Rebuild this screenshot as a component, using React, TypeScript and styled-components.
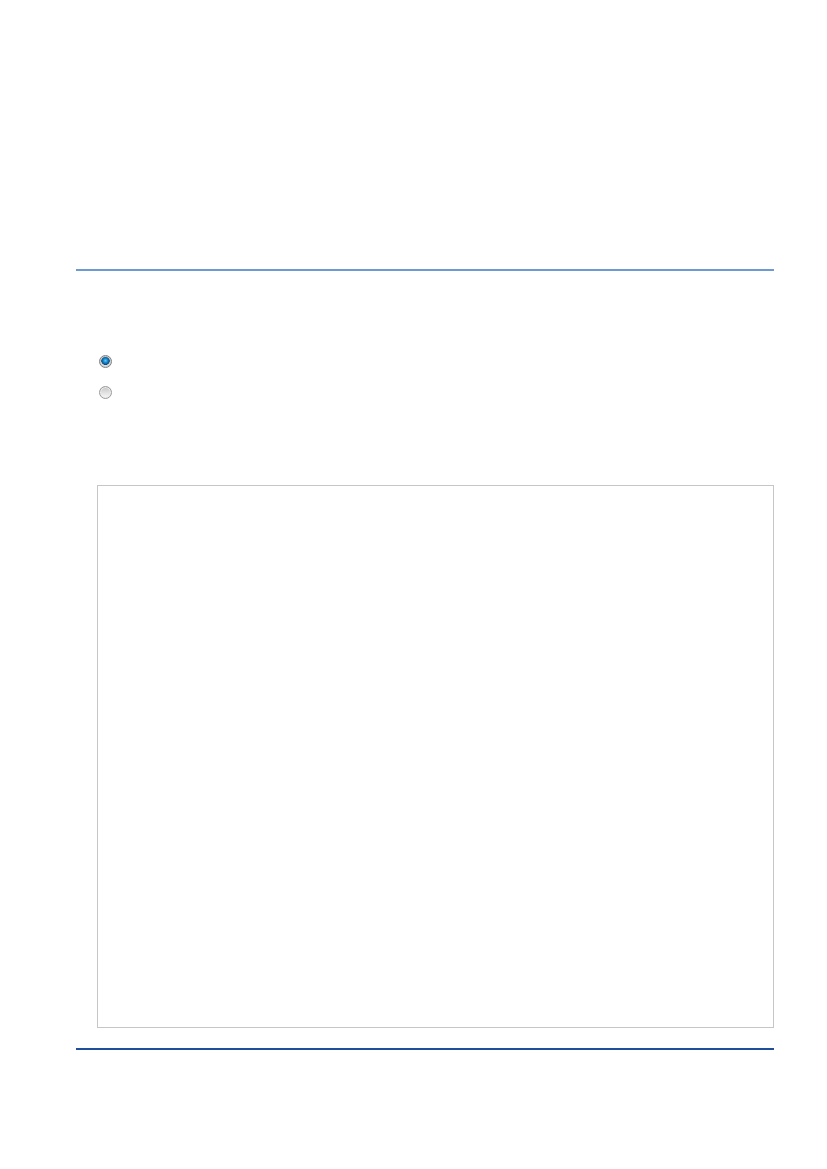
import React from "react";
import styled, { createGlobalStyle } from "styled-components";

const Global = createGlobalStyle`
  html, body {
    margin: 0;
    padding: 0;
    background: #ffffff;
    overflow: hidden;
    font-family: "Liberation Sans", Arial, sans-serif;
  }
`;

const Page = styled.div`
  width: 698px;
  padding: 269px 0 0 76px;
  display: flex;
  flex-direction: column;
`;

const Rule = styled.div<{ $tone: string }>`
  height: 2px;
  width: 100%;
  background: ${(p) => p.$tone};
`;

const OptionList = styled.div`
  display: flex;
  flex-direction: column;
  gap: 18px;
  margin: 84px 0 0 23px;
`;

const Radio = styled.span<{ $on?: boolean }>`
  display: block;
  box-sizing: border-box;
  width: 13px;
  height: 13px;
  border-radius: 50%;
  border: 1px solid ${(p) => (p.$on ? "#7f7f7f" : "#9a9a9a")};
  background: ${(p) =>
    p.$on
      ? "radial-gradient(circle at 50% 42%, #6cc8f4 0, #1b92d4 1.8px, #0b66a8 3.2px, #0a4a7c 4px, #dcdcdc 4.6px, #f4f4f4 100%)"
      : "linear-gradient(180deg, #c4c4c4 0%, #dedede 45%, #f8f8f8 100%)"};
  box-shadow: inset 0 0 0 1px ${(p) => (p.$on ? "#d0d0d0" : "#ececec")};
`;

const Panel = styled.div`
  box-sizing: border-box;
  margin: 86px 0 20px 21px;
  width: 677px;
  height: 543px;
  border: 1px solid #c6c6c6;
  background: #ffffff;
`;

export default function App() {
  return (
    <>
      <Global />
      <Page>
        <Rule $tone="#6d9bd1" />
        <OptionList>
          <Radio $on />
          <Radio />
        </OptionList>
        <Panel />
        <Rule $tone="#1f4e9b" />
      </Page>
    </>
  );
}
